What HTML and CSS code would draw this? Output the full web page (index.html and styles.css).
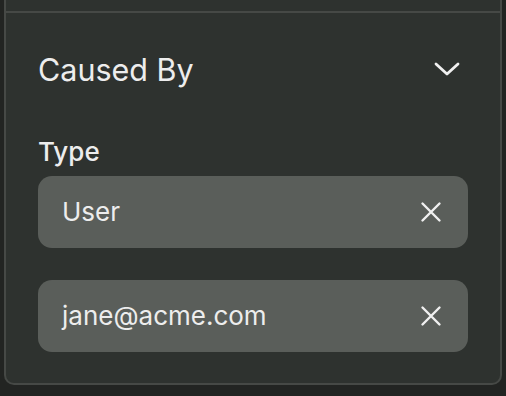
FILE: index.html
```html
<!DOCTYPE html>
<html>
<head>
<meta charset="utf-8">
<link rel="stylesheet" href="styles.css">
</head>
<body>
<div class="panel">
  <div class="prev"></div>
  <div class="section">
    <div class="header">
      <span class="title">Caused By</span>
      <svg class="chevron" width="26" height="14" viewBox="0 0 26 14"><path d="M2 2 L13 12 L24 2" fill="none" stroke="#f0f0f0" stroke-width="2.8" stroke-linecap="round" stroke-linejoin="round"/></svg>
    </div>
    <div class="label">Type</div>
    <div class="chip">
      <span class="chip-text">User</span>
      <svg class="x" width="24" height="24" viewBox="0 0 24 24"><path d="M3.5 3.5 L20.5 20.5 M20.5 3.5 L3.5 20.5" fill="none" stroke="#f0f0f0" stroke-width="2.4" stroke-linecap="round"/></svg>
    </div>
    <div class="chip chip-second">
      <span class="chip-text">jane@acme.com</span>
      <svg class="x" width="24" height="24" viewBox="0 0 24 24"><path d="M3.5 3.5 L20.5 20.5 M20.5 3.5 L3.5 20.5" fill="none" stroke="#f0f0f0" stroke-width="2.4" stroke-linecap="round"/></svg>
    </div>
  </div>
</div>
</body>
</html>
```
FILE: styles.css
```css
html, body {
  margin: 0;
  padding: 0;
  background: #222422;
  font-family: Inter, "Liberation Sans", sans-serif;
  color: #ededed;
}
.panel {
  margin-left: 4px;
  width: 498px;
  box-sizing: border-box;
  background: #2e322f;
  border: 2px solid #464946;
  border-top: none;
  border-radius: 0 0 10px 10px;
}
.prev {
  height: 11px;
}
.section {
  border-top: 2px solid #464946;
  padding: 39px 32px 31px 32px;
}
.header {
  display: flex;
  align-items: center;
  justify-content: space-between;
  height: 36px;
}
.title {
  font-size: 30.5px;
  line-height: 36px;
  font-weight: 400;
}
.chevron {
  margin-right: 8px;
  margin-bottom: 2px;
}
.label {
  margin-top: 49px;
  font-size: 26px;
  line-height: 30px;
  font-weight: 500;
}
.chip {
  margin-top: 9px;
  height: 72px;
  box-sizing: border-box;
  background: #5a5e5a;
  border-radius: 14px;
  display: flex;
  align-items: center;
  justify-content: space-between;
  padding: 0 25px 0 24px;
}
.chip-second {
  margin-top: 32px;
}
.chip-text {
  font-size: 26px;
  line-height: 30px;
}
```
